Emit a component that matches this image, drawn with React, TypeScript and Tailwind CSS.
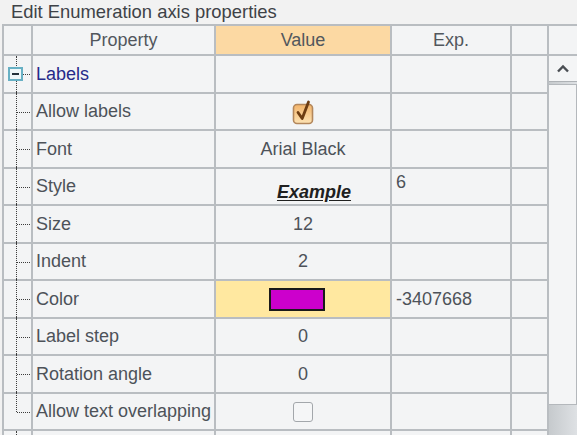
import React from "react";

type Row = {
  name: string;
  value?: React.ReactNode;
  exp?: React.ReactNode;
  highlight?: boolean;
  last?: boolean;
  h: number;
};

const Checked = () => (
  <svg width="24" height="26" viewBox="0 0 24 26">
    <defs>
      <linearGradient id="cbg" x1="0" y1="0" x2="0" y2="1">
        <stop offset="0" stopColor="#f3b46a" />
        <stop offset="1" stopColor="#fde3b4" />
      </linearGradient>
    </defs>
    <rect x="2.5" y="5.5" width="19" height="19" rx="3.5" fill="url(#cbg)" stroke="#b3875c" strokeWidth="1.6" />
    <path d="M7 13.5 L11.2 19.5 L17.5 3" fill="none" stroke="#6e3d12" strokeWidth="2.8" strokeLinecap="round" strokeLinejoin="round" />
  </svg>
);

const Unchecked = () => (
  <div className="w-[20px] h-[20px] rounded-[3px] border-[1.5px] border-[#a3a7ab] bg-[#f5f6f7]" />
);

const Swatch = () => (
  <div className="w-[56px] h-[23px] border-2 border-[#1a1a1a] bg-[#cc00cc] relative -left-[6px]" />
);

const rows: Row[] = [
  { name: "Allow labels", value: <Checked />, h: 35 },
  { name: "Font", value: "Arial Black", h: 36 },
  {
    name: "Style",
    value: (
      <span className="font-bold italic underline text-[#202020] relative top-[6px] left-[11px] underline-offset-[2px]">
        Example
      </span>
    ),
    exp: "6",
    h: 35,
  },
  { name: "Size", value: "12", h: 36 },
  { name: "Indent", value: "2", h: 35 },
  { name: "Color", value: <Swatch />, exp: "-3407668", highlight: true, h: 36 },
  { name: "Label step", value: "0", h: 35 },
  { name: "Rotation angle", value: "0", h: 36 },
  { name: "Allow text overlapping", value: <Unchecked />, last: true, h: 35 },
];

const cell = "bg-[#f3f4f5]";

export default function App() {
  return (
    <div
      className="w-[577px] h-[435px] overflow-hidden bg-[#f2f2f2] text-[18px] leading-[21px] text-[#4d5259]"
      style={{ fontFamily: '"Liberation Sans", Arial, sans-serif' }}
    >
      <div className="h-[24px] leading-[24px] pl-[11px] text-[18.4px] text-[#3e4247]">Edit Enumeration axis properties</div>
      <div className="ml-[2px]">
        <div className="grid grid-cols-[27px_181px_174px_118px_35px_28px] gap-[2px] bg-[#b9bdc1] pl-[2px] pt-[2px]">
          {/* header */}
          <div className={`${cell} h-[28px]`} />
          <div className={`${cell} h-[28px] flex items-center justify-center text-[#52575d]`}>Property</div>
          <div className="bg-[#fcd9a3] h-[28px] flex items-center justify-center text-[#52575d]">Value</div>
          <div className={`${cell} h-[28px] flex items-center justify-center text-[#52575d]`}>Exp.</div>
          <div className={`${cell} h-[28px]`} />
          <div className={`${cell} h-[28px]`} />

          {/* scrollbar */}
          <div className="row-start-2 col-start-6 row-span-11 flex flex-col bg-gradient-to-r from-[#c6cacd] to-[#dee1e4]">
            <div className="h-[26px] shrink-0 bg-[#f4f5f6] border-b border-[#aeb2b6] flex items-center justify-center">
              <svg width="14" height="9" viewBox="0 0 14 9">
                <path d="M2 7.5 L7 2.5 L12 7.5" fill="none" stroke="#4a4e53" strokeWidth="2.4" />
              </svg>
            </div>
            <div className="mt-[2px] h-[321px] shrink-0 bg-[#f4f5f6] border border-l-0 border-[#b4b8bc]" />
          </div>

          {/* Labels group row */}
          <div className={`${cell} h-[36px] relative`}>
            <div className="absolute left-[12px] top-0 h-[12px] border-l border-dotted border-[#3c3c3c]" />
            <div className="absolute left-[12px] top-[25px] -bottom-[2px] border-l border-dotted border-[#3c3c3c]" />
            <div className="absolute left-[19px] top-[18px] w-[7px] border-t border-dotted border-[#3c3c3c]" />
            <div className="absolute left-[4px] top-[11px] w-[15px] h-[14px] border-2 border-[#67b0c4] bg-[#eef7f9] flex items-center justify-center">
              <div className="w-[7px] h-[2px] bg-[#22313a]" />
            </div>
          </div>
          <div className={`${cell} h-[36px] flex items-center pl-[3px] text-[#262a8a]`}>Labels</div>
          <div className={`${cell} h-[36px]`} />
          <div className={`${cell} h-[36px]`} />
          <div className={`${cell} h-[36px]`} />

          {rows.map((r, i) => (
            <React.Fragment key={i}>
              <div className={`${cell} relative`} style={{ height: r.h }}>
                <div
                  className={`absolute left-[12px] -top-[2px] border-l border-dotted border-[#3c3c3c] ${
                    r.last ? "h-[20px]" : "-bottom-[2px]"
                  }`}
                />
                <div className="absolute left-[13px] top-[18px] w-[13px] border-t border-dotted border-[#3c3c3c]" />
              </div>
              <div className={`${cell} flex items-center pl-[3px] whitespace-nowrap`}>{r.name}</div>
              <div
                className={`${r.highlight ? "bg-[#ffe8a0]" : cell} flex items-center justify-center`}
              >
                {r.value}
              </div>
              <div className={`${cell} flex pl-[4px] ${r.name === "Style" ? "items-start pt-[3px]" : "items-center"}`}>
                {r.exp}
              </div>
              <div className={cell} />
            </React.Fragment>
          ))}

          {/* partial row */}
          <div className={`${cell} h-[20px] relative`}>
            <div className="absolute left-[12px] top-0 h-[6px] border-l border-dotted border-[#3c3c3c]" />
          </div>
          <div className={`${cell} h-[20px]`} />
          <div className={`${cell} h-[20px]`} />
          <div className={`${cell} h-[20px]`} />
          <div className={`${cell} h-[20px]`} />
        </div>
      </div>
    </div>
  );
}
